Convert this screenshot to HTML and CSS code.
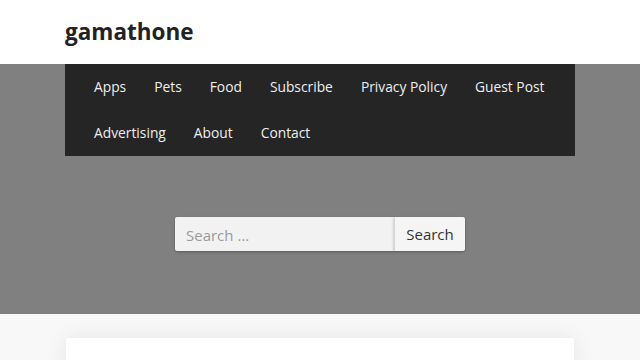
FILE: index.html
```html
<!DOCTYPE html>
<html lang="en">
<head>
<meta charset="utf-8">
<title>gamathone</title>
<link rel="stylesheet" href="styles.css">
</head>
<body>
<header class="site-header">
  <div class="container">
    <div class="site-title">gamathone</div>
  </div>
</header>
<section class="hero">
  <div class="container">
    <nav class="main-nav">
      <a href="#">Apps</a>
      <a href="#">Pets</a>
      <a href="#">Food</a>
      <a href="#">Subscribe</a>
      <a href="#">Privacy Policy</a>
      <a href="#">Guest Post</a>
      <a href="#">Advertising</a>
      <a href="#">About</a>
      <a href="#">Contact</a>
    </nav>
    <form class="search-form">
      <input class="search-field" type="search" placeholder="Search …">
      <button class="search-submit" type="button">Search</button>
    </form>
  </div>
</section>
<main class="content">
  <div class="container">
    <div class="card"></div>
  </div>
</main>
</body>
</html>
```

FILE: styles.css
```css
* { box-sizing: border-box; }
html, body { margin: 0; padding: 0; }
body {
  font-family: "Open Sans", "Noto Sans", sans-serif;
  background: #f8f8f8;
  color: #222;
  overflow: hidden;
  height: 360px;
}
.container {
  width: 510px;
  margin: 0 auto;
}
.site-header {
  background: #fff;
  height: 64px;
}
.site-title {
  font-size: 22.5px;
  font-weight: 700;
  color: #222;
  line-height: 64px;
}
.hero {
  background: #808080;
  height: 250px;
}
.main-nav {
  background: #252525;
  display: flex;
  flex-wrap: wrap;
  padding: 0 14px 0 15px;
}
.main-nav a {
  color: #eee;
  text-decoration: none;
  font-size: 13.8px;
  line-height: 46px;
  padding: 0 14px;
}
.search-form {
  display: flex;
  justify-content: center;
  margin-top: 61px;
}
.search-field {
  width: 219px;
  height: 34px;
  border: 0;
  background: #f2f2f2;
  font-family: inherit;
  font-size: 15px;
  padding: 2px 11px 0;
  color: #999;
  border-radius: 2px 0 0 2px;
  box-shadow: 0 1px 3px rgba(0,0,0,0.3);
  outline: none;
}
.search-field::placeholder { color: #9a9a9a; }
.search-submit {
  width: 71px;
  height: 34px;
  border: 0;
  border-left: 1px solid #d8d8d8;
  background: #f5f5f5;
  font-family: inherit;
  font-size: 15px;
  color: #333;
  border-radius: 0 2px 2px 0;
  box-shadow: 0 1px 3px rgba(0,0,0,0.3);
  padding: 0;
}
.content {
  padding-top: 24px;
}
.card {
  background: #fff;
  height: 100px;
  margin: 0 1px;
  box-shadow: 0 0 20px rgba(0,0,0,0.08);
}
```
